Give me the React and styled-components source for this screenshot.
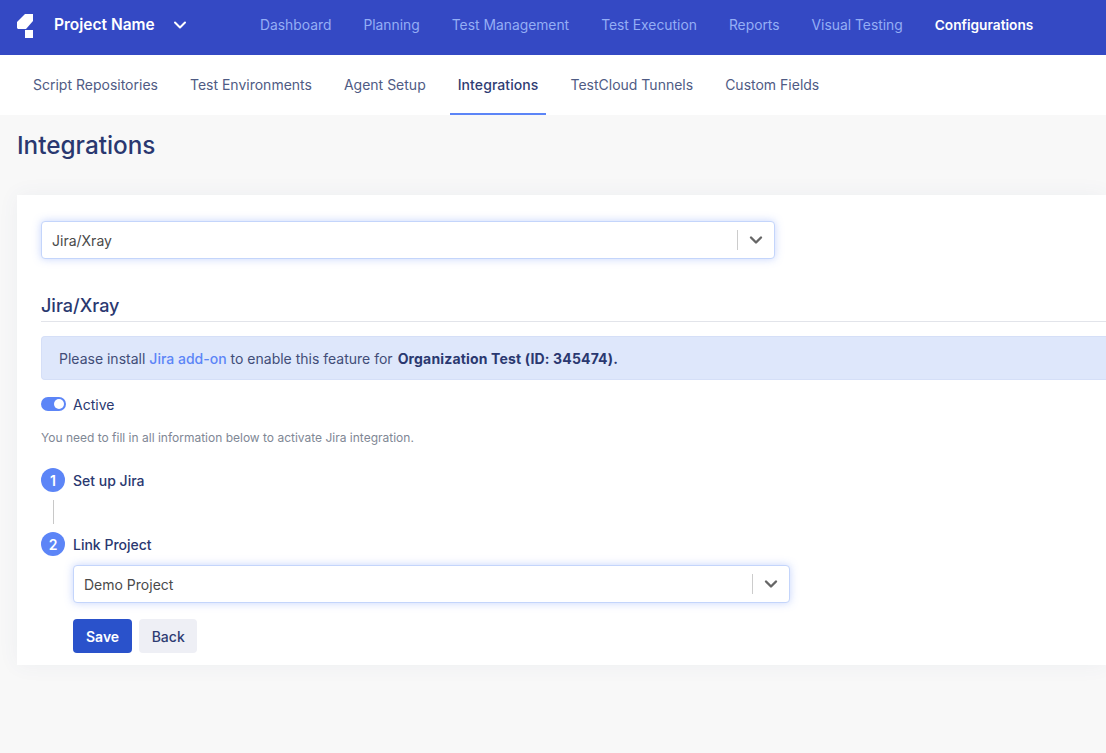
import React from 'react'
import styled, { createGlobalStyle } from 'styled-components'

const Global = createGlobalStyle`
  html, body { margin: 0; padding: 0; height: 100%; overflow: hidden; }
  body { background: #f8f8f8; font-family: Inter, "Liberation Sans", sans-serif; }
  * { box-sizing: border-box; }
`

const Page = styled.div`
  width: 1106px;
  height: 753px;
  overflow: hidden;
`

const TopBar = styled.header`
  height: 55px;
  background: #3449c4;
  display: flex;
  align-items: center;
  padding: 0 0 6px 17px;
`

const Brand = styled.div`
  display: flex;
  align-items: center;
  width: 243px;
  color: #fff;
  font-size: 15.5px;
  font-weight: 600;
  span { margin-left: 21px; }
  svg.chev { margin-left: 18px; }
`

const LogoMark = styled.svg`
  margin-top: 3px;
`

const MainNav = styled.nav`
  display: flex;
  gap: 32px;
`

const MainLink = styled.a`
  font-size: ${p => (p.$active ? '13.7px' : '13.85px')};
  color: ${p => (p.$active ? '#fff' : '#94aef5')};
  font-weight: ${p => (p.$active ? 600 : 400)};
`

const SubBar = styled.nav`
  height: 60px;
  background: #fff;
  display: flex;
  padding-left: 25px;
  gap: 16px;
  position: relative;
`

const SubLink = styled.a`
  height: 60px;
  padding: 0 8px;
  display: flex;
  align-items: center;
  font-size: 14px;
  color: ${p => (p.$active ? '#2f3c73' : '#4f5b84')};
  font-weight: ${p => (p.$active ? 500 : 400)};
  letter-spacing: ${p => (p.$active ? '0.08px' : '0')};
  border-bottom: 2px solid ${p => (p.$active ? '#5c85f7' : 'transparent')};
`

const Title = styled.h1`
  margin: 0;
  padding: 15px 0 0 17px;
  height: 80px;
  font-size: 24.3px;
  line-height: 30px;
  font-weight: 500;
  color: #2a3870;
`

const Card = styled.section`
  margin-left: 17px;
  height: 470px;
  background: #fff;
  padding: 26px 0 0 24px;
  box-shadow: 0 0 20px rgba(70, 80, 130, 0.06);
`

const SelectBox = styled.div`
  width: ${p => p.$width}px;
  height: 38px;
  background: #fff;
  border: 1px solid #c4d5fb;
  border-radius: 4px;
  box-shadow: 0 0 8px rgba(92, 133, 247, 0.35);
  display: flex;
  align-items: center;
  padding-left: 10px;
  font-size: 14px;
  color: #4a4a4a;
`

const SelectValue = styled.span`
  flex: 1;
`

const SelectDivider = styled.i`
  width: 1px;
  height: 20px;
  background: #ccc;
`

const SelectArrow = styled.span`
  width: 36px;
  display: flex;
  justify-content: center;
  align-items: center;
`

const SectionTitle = styled.h2`
  margin: 34px 0 0;
  height: 29px;
  font-size: 18px;
  line-height: 26px;
  font-weight: 500;
  color: #2a3870;
  border-bottom: 1px solid #e2e4ea;
`

const Banner = styled.div`
  margin-top: 14px;
  height: 44px;
  background: #dee7fb;
  border: 1px solid #d5dff7;
  border-right: 0;
  border-radius: 4px 0 0 4px;
  display: flex;
  align-items: center;
  padding-left: 17px;
  font-size: 14px;
  color: #414d78;
  white-space: nowrap;
  a { color: #5c85f7; margin: 0 4px; font-weight: 500; }
  b { color: #2a3870; font-weight: 700; margin-left: 5px; letter-spacing: 0.16px; }
`

const ToggleRow = styled.div`
  margin-top: 15px;
  display: flex;
  align-items: center;
  height: 18px;
  font-size: 14px;
  color: #2a3870;
`

const Toggle = styled.span`
  width: 25px;
  height: 14px;
  border-radius: 7px;
  background: #5c85f7;
  margin-right: 7px;
  display: flex;
  align-items: center;
  justify-content: flex-end;
  padding-right: 2px;
  &::after {
    content: '';
    width: 10px;
    height: 10px;
    border-radius: 50%;
    background: #fff;
  }
`

const Hint = styled.p`
  margin: 17px 0 0;
  font-size: 12px;
  line-height: 16px;
  color: #808795;
`

const Step = styled.div`
  margin-top: ${p => p.$top}px;
  display: flex;
  align-items: center;
  height: 24px;
  font-size: 14px;
  font-weight: 500;
  color: #2a3870;
`

const StepNum = styled.span`
  width: 24px;
  height: 24px;
  border-radius: 50%;
  background: #5c85f7;
  color: #fff;
  font-weight: 600;
  font-size: 14px;
  display: flex;
  align-items: center;
  justify-content: center;
  margin-right: 8px;
`

const Connector = styled.div`
  width: 1px;
  height: 24px;
  background: #c8c8c8;
  margin: 8px 0 8px 12px;
`

const StepBody = styled.div`
  margin: 9px 0 0 32px;
`

const Buttons = styled.div`
  display: flex;
  gap: 7px;
  margin-top: 16px;
`

const Button = styled.button`
  height: 34px;
  border: 0;
  border-radius: 4px;
  font-family: inherit;
  font-size: 14px;
  padding: 0 ${p => (p.$primary ? 13 : 12.5)}px;
  color: ${p => (p.$primary ? '#fff' : '#2f3c73')};
  background: ${p => (p.$primary ? '#2a52cb' : '#eeeff5')};
  font-weight: ${p => (p.$primary ? 600 : 500)};
`

const Logo = () => (
  <LogoMark width="16" height="24" viewBox="0 0 16 24">
    <path d="M8 0H16V7L9 15H1.5C.7 15 0 14.3 0 13.5V8Z" fill="#fff" />
    <rect x="8" y="16" width="8" height="8" fill="#fff" />
  </LogoMark>
)

const Chevron = ({ color, width = 2, size = 14, className }) => (
  <svg className={className} width={size} height={size} viewBox="0 0 14 14" fill="none">
    <path d="M2 4.5L7 9.5L12 4.5" stroke={color} strokeWidth={width} strokeLinecap="round" strokeLinejoin="round" />
  </svg>
)

const Select = ({ width, children }) => (
  <SelectBox $width={width}>
    <SelectValue>{children}</SelectValue>
    <SelectDivider />
    <SelectArrow><Chevron color="#666" width={2.4} /></SelectArrow>
  </SelectBox>
)

const mainLinks = ['Dashboard', 'Planning', 'Test Management', 'Test Execution', 'Reports', 'Visual Testing']
const subLinks = ['Script Repositories', 'Test Environments', 'Agent Setup', 'Integrations', 'TestCloud Tunnels', 'Custom Fields']

export default function App() {
  return (
    <Page>
      <Global />
      <TopBar>
        <Brand>
          <Logo />
          <span>Project Name</span>
          <Chevron className="chev" color="#fff" />
        </Brand>
        <MainNav>
          {mainLinks.map(l => <MainLink key={l}>{l}</MainLink>)}
          <MainLink $active>Configurations</MainLink>
        </MainNav>
      </TopBar>
      <SubBar>
        {subLinks.map(l => <SubLink key={l} $active={l === 'Integrations'}>{l}</SubLink>)}
      </SubBar>
      <Title>Integrations</Title>
      <Card>
        <Select width={734}>Jira/Xray</Select>
        <SectionTitle>Jira/Xray</SectionTitle>
        <Banner>
          Please install <a>Jira add-on</a> to enable this feature for <b>Organization Test (ID: 345474).</b>
        </Banner>
        <ToggleRow><Toggle />Active</ToggleRow>
        <Hint>You need to fill in all information below to activate Jira integration.</Hint>
        <Step $top={22}><StepNum>1</StepNum>Set up Jira</Step>
        <Connector />
        <Step $top={0}><StepNum>2</StepNum>Link Project</Step>
        <StepBody>
          <Select width={717}>Demo Project</Select>
          <Buttons>
            <Button $primary>Save</Button>
            <Button>Back</Button>
          </Buttons>
        </StepBody>
      </Card>
    </Page>
  )
}
